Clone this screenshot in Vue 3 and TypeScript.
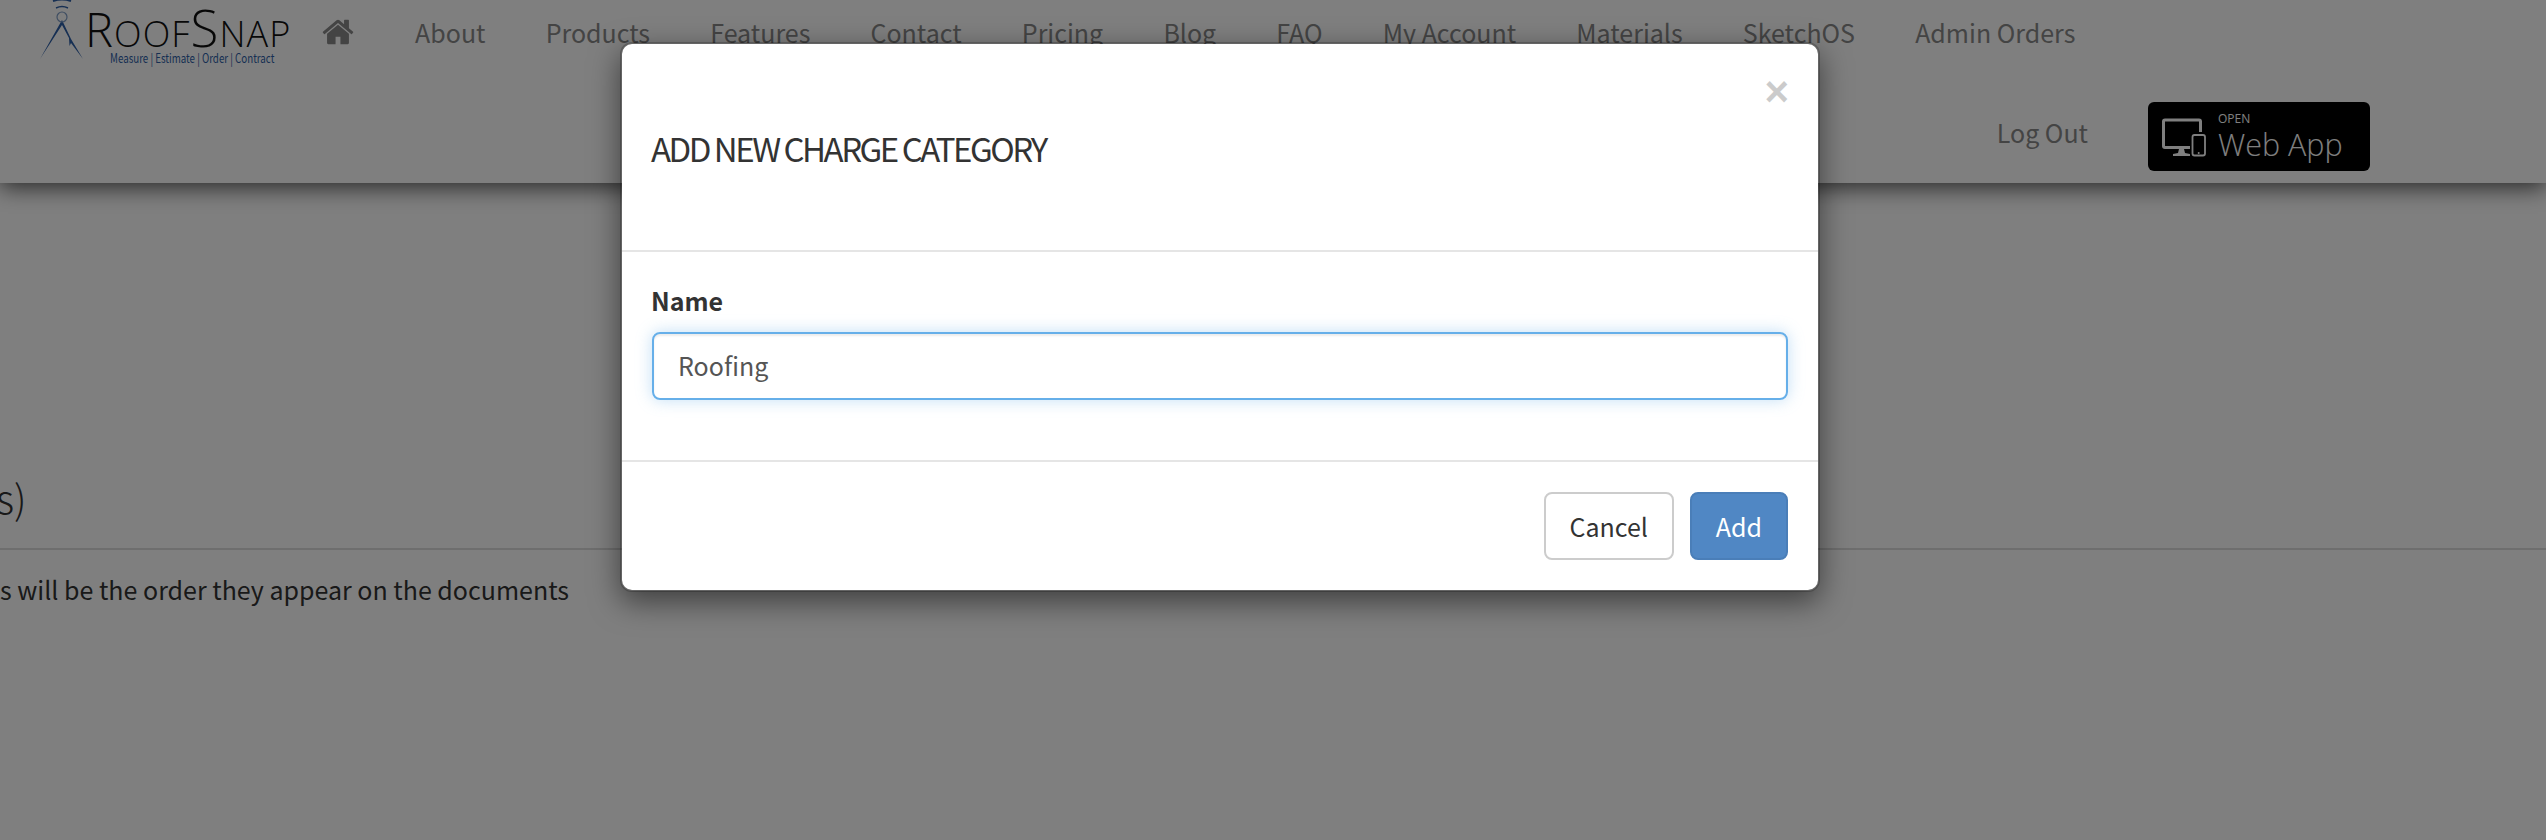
<script setup lang="ts">
const links: string[] = ['About', 'Products', 'Features', 'Contact', 'Pricing', 'Blog', 'FAQ', 'My Account', 'Materials', 'SketchOS', 'Admin Orders']
</script>

<template>
  <div class="page">
    <header class="site-header">
      <div class="top-row">
        <a class="logo">
          <svg class="logo-mark" viewBox="0 0 50 62" width="50" height="62" aria-hidden="true">
            <path d="M24 20 L2 59 L24 25 L31 38 L31.500 46 L33 43 L45 59 L33 39 Z" fill="#2d5ea6" />
            <circle cx="24" cy="17" r="5" fill="none" stroke="#7f9cc4" stroke-width="1.200" />
            <path d="M18 8 Q24 5 30 8" fill="none" stroke="#2d5ea6" stroke-width="1.400" />
            <path d="M15 1 Q24 -2 33 1" fill="none" stroke="#2d5ea6" stroke-width="2" />
          </svg>
          <div class="logo-text">
            <div class="wordmark"><span class="big">R</span>OOF<span class="bigger">S</span>NAP</div>
            <div class="tagline">Measure | Estimate | Order | Contract</div>
          </div>
        </a>
        <svg class="home" viewBox="0 0 1792 1792" width="34" height="34" aria-hidden="true">
          <path d="M1472 992v480q0 26-19 45t-45 19h-384v-384h-256v384h-384q-26 0-45-19t-19-45v-480q0-1 .5-3t.5-3l575-474 575 474q1 2 1 6zm223-69l-62 74q-8 9-21 11h-3q-13 0-21-7l-692-577-692 577q-12 8-24 7-13-2-21-11l-62-74q-8-10-7-23.500t11-21.500l719-599q32-26 76-26t76 26l244 204v-195q0-14 9-23t23-9h192q14 0 23 9t9 23v408l219 182q10 8 11 21.500t-7 23.500z" fill="#888" />
        </svg>
        <nav class="nav">
          <a v-for="link in links" :key="link" class="nav-link">{{ link }}</a>
        </nav>
      </div>
      <div class="bottom-row">
        <a class="nav-link logout">Log Out</a>
        <a class="web-app">
          <svg viewBox="0 0 46 40" width="46" height="40" aria-hidden="true">
            <path d="M4 1.500H38Q41 1.500 41 4.500V15H38V4.500H4V29H29V32H4Q1 32 1 29V4.500Q1 1.500 4 1.500Z" fill="#fff" />
            <path d="M18 32H23L24 36L29 37V39H12V37L17 36Z" fill="#fff" />
            <rect x="31.500" y="18" width="12.500" height="20.500" rx="2" fill="none" stroke="#fff" stroke-width="1.800" />
            <circle cx="37.700" cy="36" r="1" fill="#fff" />
          </svg>
          <span class="web-app-text">
            <span class="open">OPEN</span>
            <span class="web">Web App</span>
          </span>
        </a>
      </div>
    </header>
    <main class="content">
      <h2 class="section-title"><span class="clipped">s)</span></h2>
      <p class="section-note">s will be the order they appear on the documents</p>
    </main>

    <div class="overlay">
      <div class="modal">
        <div class="modal-header">
          <button class="close" type="button">×</button>
          <h4 class="modal-title">ADD NEW CHARGE CATEGORY</h4>
        </div>
        <div class="modal-body">
          <label class="field-label" for="cat-name">Name</label>
          <div class="input" id="cat-name">Roofing</div>
        </div>
        <div class="modal-footer">
          <button class="btn btn-default" type="button">Cancel</button>
          <button class="btn btn-primary" type="button">Add</button>
        </div>
      </div>
    </div>
  </div>
</template>

<style>
html,
body {
  margin: 0;
  background: #fff;
}
</style>

<style scoped>
.page {
  position: relative;
  width: 2546px;
  height: 840px;
  overflow: hidden;
  background: #fff;
  color: #333;
  font-family: "Noto Sans CJK SC", "Noto Sans", sans-serif;
  font-size: 25px;
}
.site-header {
  height: 183px;
  box-sizing: border-box;
  background: #fff;
  box-shadow: 0 4px 22px rgba(0, 0, 0, 0.7);
  display: flex;
  flex-direction: column;
}
.top-row {
  display: flex;
  align-items: center;
  height: 64px;
}
.logo {
  display: flex;
  align-items: flex-start;
  margin-left: 38px;
  width: 250px;
  height: 64px;
  align-self: flex-start;
}
.logo-mark {
  flex: none;
}
.logo-text {
  margin-left: -3px;
  margin-top: 2px;
}
.wordmark {
  font-family: "Open Sans", sans-serif;
  font-weight: 300;
  font-size: 36px;
  line-height: 50px;
  height: 50px;
  letter-spacing: 1.100px;
  color: #111;
  white-space: nowrap;
}
.wordmark .big {
  font-size: 47px;
}
.wordmark .bigger {
  font-size: 51px;
}
.tagline {
  font-size: 12.500px;
  line-height: 12px;
  color: #2d5ea6;
  margin: 0 0 0 25px;
  white-space: nowrap;
  transform: scaleX(0.78);
  transform-origin: left center;
}
.home {
  flex: none;
  margin-left: 33px;
}
.nav {
  display: flex;
  margin-left: 30px;
}
.nav-link {
  padding: 0 30.080px;
  color: #888;
  line-height: 62px;
  white-space: nowrap;
}
.bottom-row {
  display: flex;
  justify-content: flex-end;
  align-items: center;
  margin-top: 38px;
  padding-right: 176px;
}
.logout {
  padding: 0;
  margin-right: 60px;
  line-height: 40px;
  margin-top: -9px;
}
.web-app {
  display: flex;
  align-items: center;
  gap: 11px;
  box-sizing: border-box;
  width: 222px;
  height: 69px;
  padding: 0 0 0 13px;
  background: #000;
  border-radius: 6px;
  color: #fff;
}
.web-app-text {
  display: flex;
  flex-direction: column;
  font-family: "Open Sans", sans-serif;
}
.open {
  font-size: 12px;
  line-height: 14px;
}
.web {
  font-size: 30.500px;
  font-weight: 300;
  line-height: 36px;
  white-space: nowrap;
}
.content {
  padding-top: 291px;
}
.section-title {
  margin: 0;
  font-size: 40px;
  font-weight: 300;
  line-height: 46px;
  padding-bottom: 28px;
  border-bottom: 2px solid #ddd;
  color: #333;
}
.clipped {
  display: block;
  margin-left: -4px;
}
.section-note {
  margin: 19px 0 0;
  line-height: 40px;
  color: #333;
}
.overlay {
  position: absolute;
  inset: 0;
  background: rgba(0, 0, 0, 0.5);
}
.modal {
  box-sizing: border-box;
  width: 1200px;
  margin: 42px 0 0 620px;
  background: #fff;
  background-clip: padding-box;
  border: 2px solid rgba(0, 0, 0, 0.2);
  border-radius: 12px;
  box-shadow: 0 10px 30px rgba(0, 0, 0, 0.5);
}
.modal-header {
  position: relative;
  height: 208px;
  box-sizing: border-box;
  padding: 0 30px;
  border-bottom: 2px solid #e5e5e5;
}
.close {
  position: absolute;
  top: 23px;
  right: 29px;
  padding: 0;
  border: 0;
  background: none;
  color: #000;
  opacity: 0.2;
  font-family: "Liberation Sans", sans-serif;
  font-size: 42px;
  font-weight: 700;
  line-height: 50px;
}
.modal-title {
  margin: 0 0 0 -1px;
  padding-top: 80px;
  font-size: 33px;
  font-weight: 400;
  line-height: 48px;
  letter-spacing: -2.500px;
  color: #333;
}
.modal-body {
  padding: 30px;
  height: 208px;
  box-sizing: border-box;
}
.field-label {
  display: block;
  margin: -2px 0 12px -1px;
  font-weight: 700;
  line-height: 40px;
}
.input {
  box-sizing: border-box;
  height: 68px;
  padding: 12px 24px;
  border: 2px solid #66afe9;
  border-radius: 8px;
  box-shadow: inset 0 2px 2px rgba(0, 0, 0, 0.075), 0 0 16px rgba(102, 175, 233, 0.4);
  color: #555;
  line-height: 38px;
}
.modal-footer {
  display: flex;
  justify-content: flex-end;
  gap: 16px;
  padding: 30px;
  border-top: 2px solid #e5e5e5;
}
.btn {
  box-sizing: border-box;
  height: 68px;
  padding: 0 24px;
  border: 2px solid;
  border-radius: 8px;
  font: inherit;
  line-height: 40px;
}
.btn-default {
  width: 130px;
  padding: 0;
  background: #fff;
  border-color: #ccc;
  color: #333;
}
.btn-primary {
  background: #5087c4;
  border-color: #4a7eb8;
  color: #fff;
}
</style>
